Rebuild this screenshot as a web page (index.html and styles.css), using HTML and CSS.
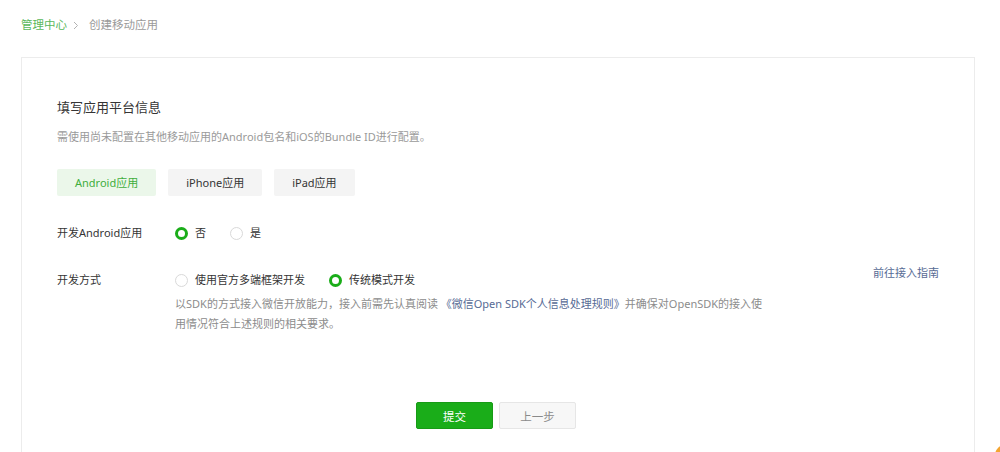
FILE: index.html
```html
<!DOCTYPE html>
<html lang="zh-CN">
<head>
  <meta charset="UTF-8">
  <meta name="viewport" content="width=device-width, initial-scale=1.0">
  <title>创建移动应用</title>
  <link rel="stylesheet" href="styles.css">
</head>
<body>

  <div class="page">
    <!-- Breadcrumb -->
    <div class="breadcrumb">
      <a class="crumb-link" href="#">管理中心</a>
      <svg class="crumb-sep" width="6" height="9" viewBox="0 0 6 9"><path d="M1 1l3.5 3.5L1 8" fill="none" stroke="#b2b2b2" stroke-width="1"/></svg>
      <span class="crumb-current">创建移动应用</span>
    </div>

    <div class="card">
      <h2 class="card-title">填写应用平台信息</h2>
      <div class="card-desc">需使用尚未配置在其他移动应用的Android包名和iOS的Bundle ID进行配置。</div>

      <!-- Platform tabs -->
      <div class="tabs">
        <div class="tab active">Android应用</div>
        <div class="tab">iPhone应用</div>
        <div class="tab">iPad应用</div>
      </div>

      <div class="form-row first">
        <div class="form-label">开发Android应用</div>
        <div class="form-field">
          <div class="radio-group">
            <label class="radio checked"><span class="radio-dot"></span>否</label>
            <label class="radio"><span class="radio-dot"></span>是</label>
          </div>
        </div>
      </div>

      <div class="form-row">
        <div class="form-label">开发方式</div>
        <div class="form-field">
          <div class="radio-group">
            <label class="radio"><span class="radio-dot"></span>使用官方多端框架开发</label>
            <label class="radio checked"><span class="radio-dot"></span>传统模式开发</label>
          </div>
          <p class="field-tip">以SDK的方式接入微信开放能力，接入前需先认真阅读 <a href="#">《微信Open SDK个人信息处理规则》</a>并确保对OpenSDK的接入使用情况符合上述规则的相关要求。</p>
        </div>
        <a class="guide-link" href="#">前往接入指南</a>
      </div>

      <!-- Actions -->
      <div class="actions">
        <button class="btn btn-primary">提交</button>
        <button class="btn btn-default">上一步</button>
      </div>
    </div>
  </div>

  <!-- floating helper, mostly off screen -->
  <div class="float-help"></div>

</body>
</html>
```

FILE: styles.css
```css
body {
  margin: 0;
  padding: 0;
  background-color: #ffffff;
  font-family: "Noto Sans", "Noto Sans CJK SC", sans-serif;
  color: #353535;
  overflow: hidden;
  position: relative;
  height: 452px;
}

a {
  text-decoration: none;
}

.page {
  padding: 0 25px 0 21px;
}

.breadcrumb {
  height: 57px;
  display: flex;
  align-items: flex-start;
  padding-top: 16px;
  box-sizing: border-box;
  font-size: 11.5px;
  line-height: 18px;
}

.crumb-link {
  color: #5ab85b;
}

.crumb-sep {
  margin: 5px 10px 0 6px;
}

.crumb-current {
  color: #9a9a9a;
}

.card {
  border: 1px solid #ececec;
  border-bottom: none;
  padding: 39px 35px 0 35px;
  height: 395px;
  box-sizing: border-box;
}

.card-title {
  margin: 0;
  font-size: 13px;
  font-weight: normal;
  line-height: 20px;
  color: #353535;
}

.card-desc {
  margin-top: 10px;
  font-size: 11px;
  line-height: 20px;
  color: #9a9a9a;
}

.tabs {
  display: flex;
  gap: 12px;
  margin-top: 22px;
}

.tab {
  height: 27px;
  line-height: 27px;
  padding: 0 18px;
  font-size: 11px;
  background-color: #f4f4f4;
  color: #353535;
  border-radius: 2px;
}

.tab.active {
  background-color: #ebf7ea;
  color: #3fae3c;
}

.form-row {
  display: flex;
  margin-top: 26px;
  font-size: 11px;
  line-height: 20px;
}

.form-row.first {
  margin-top: 27px;
}

.form-row + .form-row {
  margin-top: 27px;
}

.form-label {
  width: 118px;
  flex-shrink: 0;
}

.form-field {
  flex: 1;
}

.radio-group {
  display: flex;
  gap: 24px;
}

.radio {
  display: flex;
  align-items: center;
  cursor: pointer;
}

.radio-dot {
  width: 13px;
  height: 13px;
  border: 1px solid #d9d9d9;
  border-radius: 50%;
  margin-right: 7px;
  box-sizing: border-box;
}

.radio.checked .radio-dot {
  border: 3.5px solid #1aad19;
}

.field-tip {
  margin: 4px 0 0 0;
  width: 594px;
  font-size: 11px;
  line-height: 20px;
  color: #8c8c8c;
}

.field-tip a {
  color: #576b95;
}

.guide-link {
  color: #576b95;
  font-size: 11px;
  line-height: 20px;
  align-self: flex-start;
  margin-top: -7px;
}

.actions {
  display: flex;
  justify-content: center;
  gap: 6px;
  margin-top: 68px;
  padding-right: 4px;
}

.btn {
  width: 77px;
  height: 27px;
  font-size: 11.5px;
  font-family: inherit;
  border-radius: 2px;
  cursor: pointer;
}

.btn-primary {
  background-color: #1aad19;
  border: 1px solid #179b16;
  color: #ffffff;
}

.btn-default {
  background-color: #f7f7f7;
  border: 1px solid #e6e6e6;
  color: #8a8a8a;
}

.float-help {
  position: absolute;
  left: 995px;
  top: 445px;
  width: 20px;
  height: 20px;
  border-radius: 50%;
  background-color: #f4a531;
}
```
